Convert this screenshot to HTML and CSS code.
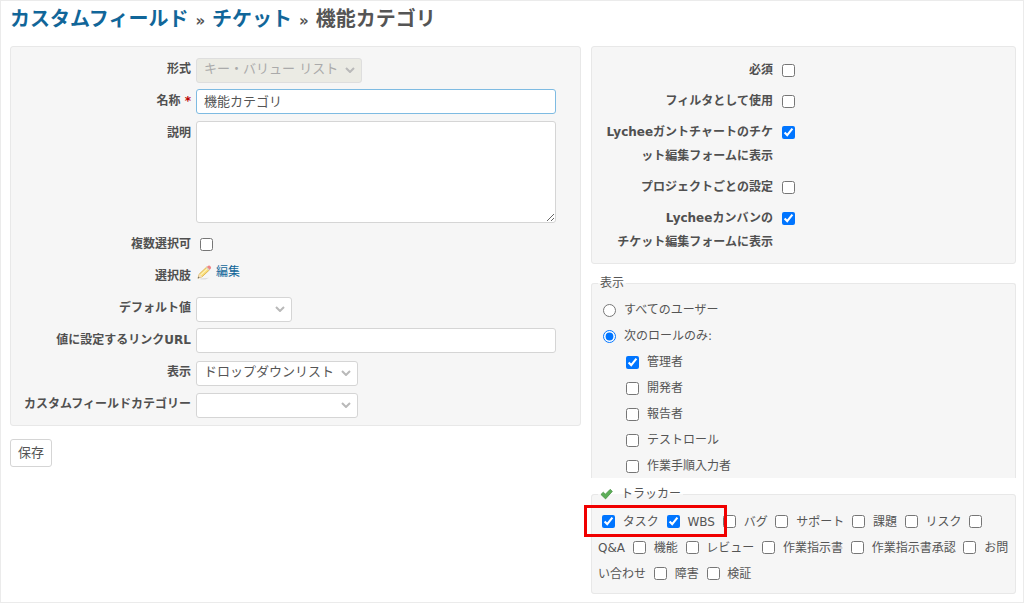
FILE: index.html
```html
<!DOCTYPE html>
<html lang="ja">
<head>
<meta charset="utf-8">
<title>カスタムフィールド - 機能カテゴリ</title>
<link rel="stylesheet" href="styles.css">
</head>
<body>
<main class="content">
  <h2 class="title"><a href="#">カスタムフィールド</a> <span class="sep">»</span> <a href="#">チケット</a> <span class="sep">»</span> 機能カテゴリ</h2>
  <form class="columns">
    <div class="col">
      <div class="box main-box">
        <div class="row">
          <label for="format">形式</label>
          <span class="select w-format"><select id="format" disabled><option>キー・バリュー リスト</option></select><svg viewBox="0 0 10 6"><path d="M1 1l4 4 4-4"/></svg></span>
        </div>
        <div class="row">
          <label for="name">名称 <span class="required">*</span></label>
          <input class="text active" id="name" type="text" value="機能カテゴリ">
        </div>
        <div class="row row-area">
          <label for="desc">説明</label>
          <textarea id="desc"></textarea>
        </div>
        <div class="row">
          <label for="multiple">複数選択可</label>
          <input class="check" id="multiple" type="checkbox">
        </div>
        <div class="row">
          <span class="label">選択肢</span>
          <a class="edit" href="#"><svg viewBox="0 0 16 16"><path d="M3 14.500l10-1-4 2H4z" fill="#ddd"/><path d="M1 14l1.500-4.500L10.500 2l3 3L5.500 12.500z" fill="#f8dc78" stroke="#d9a93c" stroke-width=".8"/><path d="M3.500 11l8-7.500" stroke="#fff3b8" stroke-width="1.200"/><path d="M10.300 2.200L12 .8q1.500-.5 2.500.8t.2 2.200l-1.400 1.400z" fill="#ef8585"/><path d="M9.700 2.800l3 3 .9-.8-3-3z" fill="#d5d5d5"/><path d="M1 14l1.500-4.500 3 3z" fill="#f4dfc0"/><path d="M.8 14.300l.7-2 1.300 1.300z" fill="#666"/></svg>編集</a>
        </div>
        <div class="row">
          <label for="default">デフォルト値</label>
          <span class="select w-default"><select id="default"><option></option></select><svg viewBox="0 0 10 6"><path d="M1 1l4 4 4-4"/></svg></span>
        </div>
        <div class="row">
          <label for="url">値に設定するリンクURL</label>
          <input class="text" id="url" type="text">
        </div>
        <div class="row">
          <label for="display">表示</label>
          <span class="select w-list"><select id="display"><option>ドロップダウンリスト</option></select><svg viewBox="0 0 10 6"><path d="M1 1l4 4 4-4"/></svg></span>
        </div>
        <div class="row">
          <label for="category">カスタムフィールドカテゴリー</label>
          <span class="select w-list"><select id="category"><option></option></select><svg viewBox="0 0 10 6"><path d="M1 1l4 4 4-4"/></svg></span>
        </div>
      </div>
      <button class="save" type="submit">保存</button>
    </div>
    <div class="col">
      <div class="box option-box">
        <div class="row"><label for="req">必須</label><input class="check" id="req" type="checkbox"></div>
        <div class="row"><label for="filter">フィルタとして使用</label><input class="check" id="filter" type="checkbox"></div>
        <div class="row"><label for="gantt">Lycheeガントチャートのチケ<br>ット編集フォームに表示</label><input class="check" id="gantt" type="checkbox" checked></div>
        <div class="row"><label for="project">プロジェクトごとの設定</label><input class="check" id="project" type="checkbox"></div>
        <div class="row"><label for="kanban">Lycheeカンバンの<br>チケット編集フォームに表示</label><input class="check" id="kanban" type="checkbox" checked></div>
      </div>
      <fieldset class="group visibility">
        <legend>表示</legend>
        <div class="choices">
          <label><input type="radio" name="visible">すべてのユーザー</label>
          <label><input type="radio" name="visible" checked>次のロールのみ:</label>
          <label class="role"><input type="checkbox" checked>管理者</label>
          <label class="role"><input type="checkbox">開発者</label>
          <label class="role"><input type="checkbox">報告者</label>
          <label class="role"><input type="checkbox">テストロール</label>
          <label class="role"><input type="checkbox">作業手順入力者</label>
        </div>
      </fieldset>
      <fieldset class="group trackers">
        <legend><svg viewBox="0 0 14 12"><path d="M1 6.500L3.500 4l2.300 2.200L11 1l2.300 2.200L6 11.300z" fill="#5cae58" stroke="#469143" stroke-width=".8" stroke-linejoin="round"/></svg>トラッカー</legend>
        <div class="tracker-list">
          <label><input type="checkbox" checked> タスク</label>
          <label><input type="checkbox" checked> WBS</label>
          <label><input type="checkbox"> バグ</label>
          <label><input type="checkbox"> サポート</label>
          <label><input type="checkbox"> 課題</label>
          <label><input type="checkbox"> リスク</label>
          <label><input type="checkbox"> Q&amp;A</label>
          <label><input type="checkbox"> 機能</label>
          <label><input type="checkbox"> レビュー</label>
          <label><input type="checkbox"> 作業指示書</label>
          <label><input type="checkbox"> 作業指示書承認</label>
          <label><input type="checkbox"> お問い合わせ</label>
          <label><input type="checkbox"> 障害</label>
          <label><input type="checkbox"> 検証</label>
        </div>
      </fieldset>
    </div>
  </form>
</main>
</body>
</html>
```
FILE: styles.css
```css
*,
*::after {
  box-sizing: border-box;
}

body {
  margin: 0;
  background: #fff;
  color: #555;
  font: 12px/24px "DejaVu Sans", "Noto Sans CJK JP", sans-serif;
}

.content {
  min-height: 100vh;
  padding: 4px 7px 7px 9px;
  border: 1px solid #ebebeb;
}

a {
  color: #169;
  text-decoration: none;
}

.title {
  margin: 0 0 11px;
  font-size: 20px;
  line-height: 28px;
}

.sep {
  font-size: 15px;
}

.columns {
  display: grid;
  grid-template-columns: 571fr 425fr;
  gap: 10px;
  align-items: start;
}

.col {
  min-width: 0;
}

.box {
  display: flex;
  flex-direction: column;
  gap: 7px;
  background: #f6f6f6;
  border: 1px solid #e8e8e8;
  border-radius: 3px;
}

.main-box {
  padding: 10px 24px 8px 0;
}

.option-box {
  padding: 11px 8px 9px 0;
}

.row {
  display: flex;
  align-items: flex-start;
  min-height: 24px;
}

.main-box .row {
  min-height: 25px;
}

.main-box .row-area {
  min-height: 104px;
}

.row > label,
.row > .label {
  flex: none;
  width: 180px;
  margin-right: 5px;
  color: #505050;
  font-weight: bold;
  text-align: right;
  white-space: nowrap;
}

.option-box .row > label {
  width: 181px;
}

.required {
  color: #b00;
}

.text,
textarea,
select,
.save {
  border: 1px solid #d5d5d5;
  border-radius: 3px;
  background: #fff;
  color: #555;
  font: 13px/20px "DejaVu Sans", "Noto Sans CJK JP", sans-serif;
}

.text,
textarea {
  flex: 1;
  min-width: 0;
  height: 25px;
  padding: 0 7px 3px;
}

.text.active {
  border-color: #7ebbe2;
  outline: none;
}

textarea {
  height: 102px;
}

input[type="checkbox"],
input[type="radio"] {
  width: 13px;
  height: 13px;
  margin: 0;
  flex: none;
}

.row .check {
  margin: 6px 0 0 4px;
}

.select {
  position: relative;
  display: block;
  height: 25px;
}

.select select {
  appearance: none;
  width: 100%;
  height: 100%;
  padding: 0 7px 2px;
}

.select select:disabled {
  background: #ebebe4;
  border-color: #dedede;
  color: #aaa;
  opacity: 1;
}

.select svg {
  position: absolute;
  right: 7px;
  top: 10px;
  width: 10px;
  height: 6px;
  fill: none;
  stroke: #b9b9b9;
  stroke-width: 2;
  pointer-events: none;
}

.w-format {
  width: 166px;
}

.w-default {
  width: 96px;
}

.w-list {
  width: 162px;
}

.edit {
  display: flex;
  align-items: center;
  gap: 4px;
  height: 16px;
}

.edit svg {
  width: 15px;
  height: 15px;
  margin-left: 1px;
}

.save {
  display: block;
  margin-top: 13px;
  height: 28px;
  padding: 0 7px;
}

.group {
  min-width: 0;
  margin: 7px 0 0;
  padding: 0 6px;
  background: #f6f6f6;
  border: 1px solid #e8e8e8;
  border-radius: 3px;
}

.group legend {
  display: flex;
  align-items: center;
  padding: 0 2px;
}

.visibility {
  border-bottom: 0;
  border-radius: 3px 3px 0 0;
}

.choices {
  display: grid;
  gap: 2px;
  padding: 3px 0 0 5px;
}

.choices label {
  display: flex;
  align-items: center;
  gap: 8px;
}

.choices .role {
  padding-left: 23px;
}

.trackers {
  margin-top: 4px;
  padding-bottom: 6px;
}

.trackers legend {
  gap: 8px;
}

.trackers legend svg {
  width: 13px;
  height: 12px;
}

.tracker-list {
  position: relative;
  padding-top: 3px;
  line-height: 26px;
}

.tracker-list input[type="checkbox"] {
  margin: 0 4px;
  vertical-align: -2px;
}

.tracker-list::after {
  content: "";
  position: absolute;
  top: -1px;
  left: -14px;
  width: 143px;
  height: 32px;
  border: 3px solid #f00000;
  pointer-events: none;
}
```
